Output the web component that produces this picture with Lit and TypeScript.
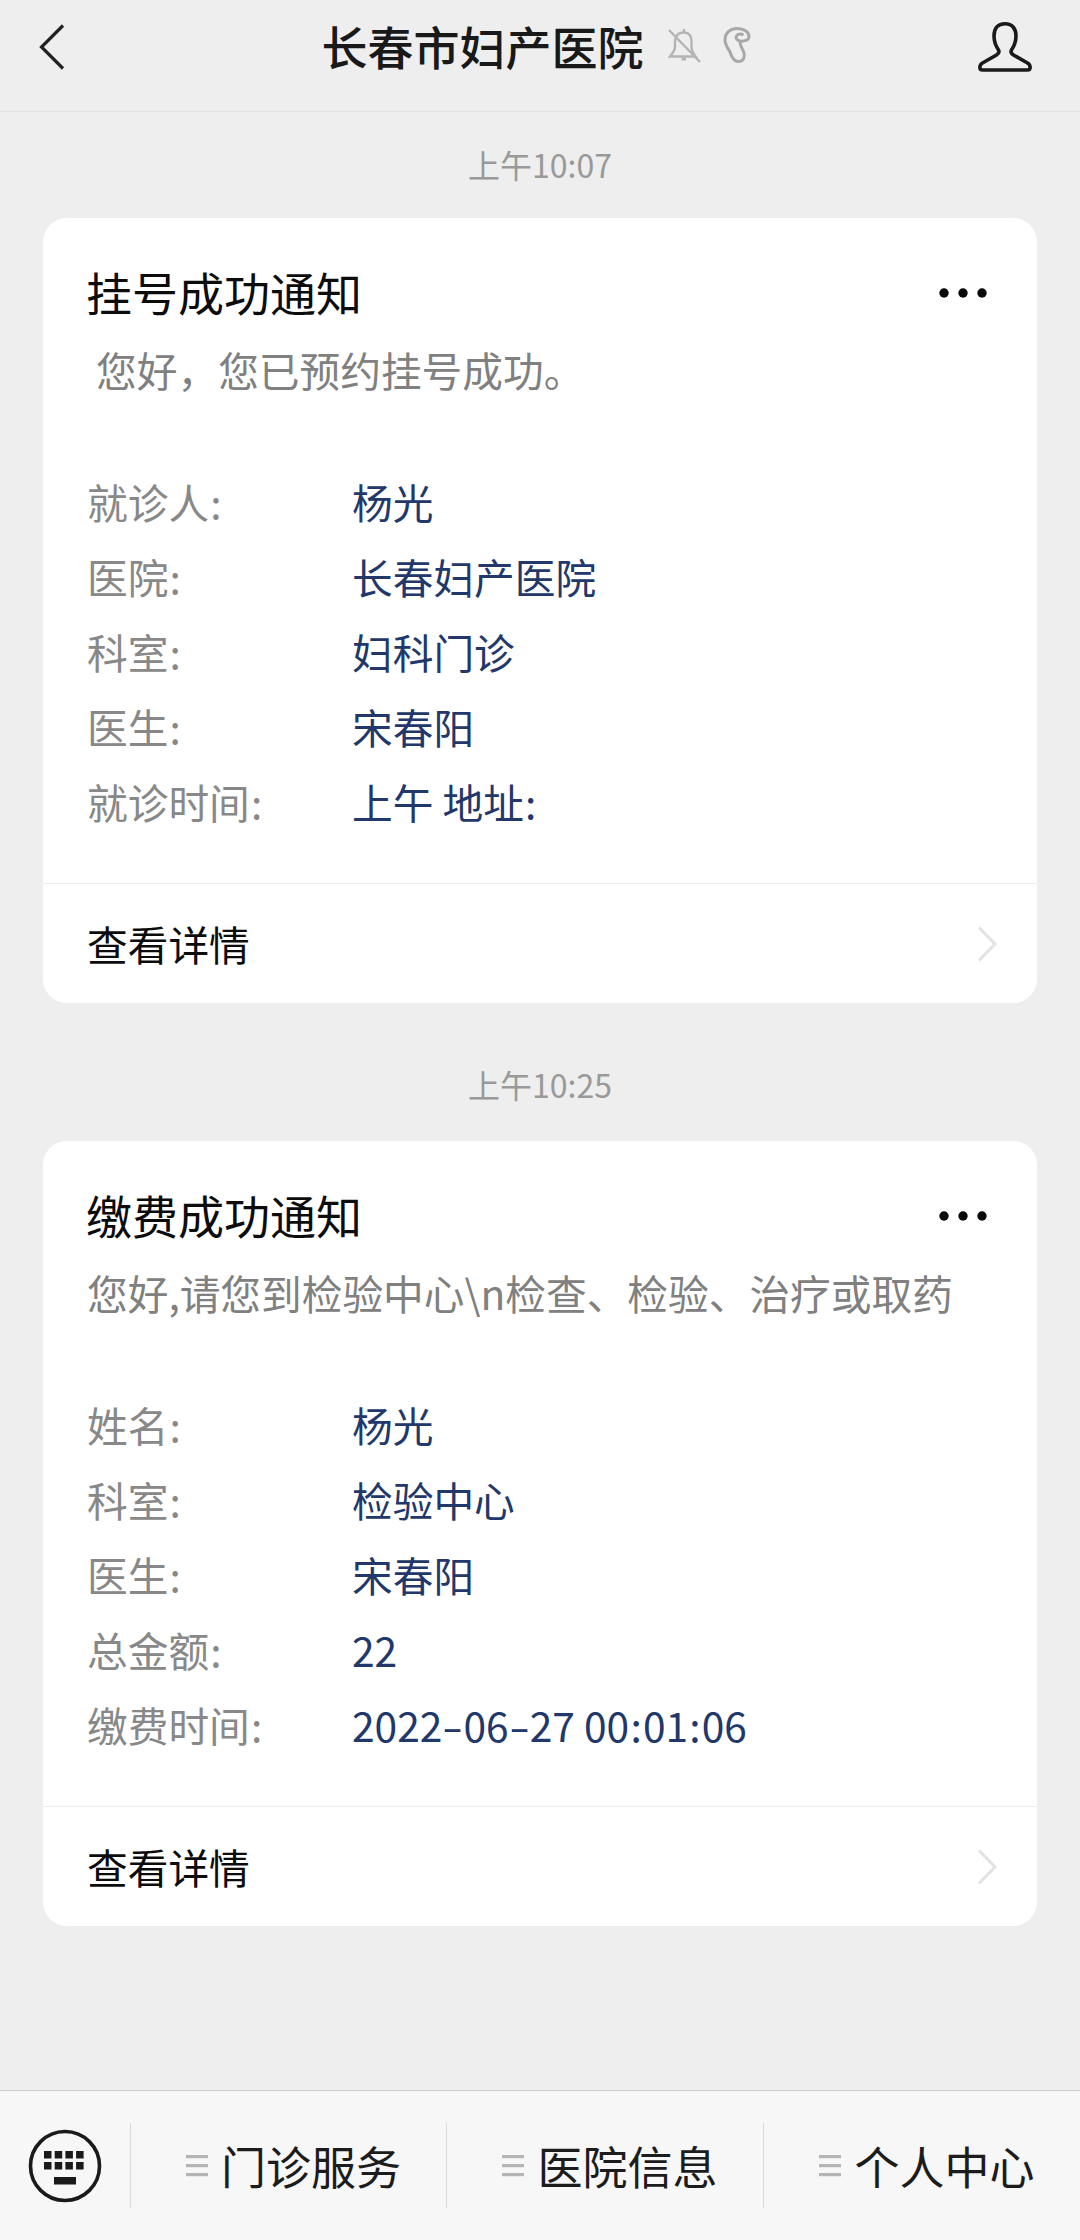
import { LitElement, html, css, svg } from "lit";
import { customElement } from "lit/decorators.js";

interface Notice {
  time: string;
  title: string;
  intro: string;
  rows: [string, string][];
}

const notices: Notice[] = [
  {
    time: "上午10:07",
    title: "挂号成功通知",
    intro: " 您好\uFF0C您已预约挂号成功。",
    rows: [
      ["就诊人:", "杨光"],
      ["医院:", "长春妇产医院"],
      ["科室:", "妇科门诊"],
      ["医生:", "宋春阳"],
      ["就诊时间:", "上午 地址:"],
    ],
  },
  {
    time: "上午10:25",
    title: "缴费成功通知",
    intro: "您好,请您到检验中心\\n检查、检验、治疗或取药",
    rows: [
      ["姓名:", "杨光"],
      ["科室:", "检验中心"],
      ["医生:", "宋春阳"],
      ["总金额:", "22"],
      ["缴费时间:", "2022-06-27 00:01:06"],
    ],
  },
];

const menus = ["门诊服务", "医院信息", "个人中心"];

const keys = [0, 1, 2, 3].flatMap((col) =>
  [0, 1].map(
    (row) => svg`<rect x=${16 + col * 10.7} y=${22 + row * 11} width="7.5" height="7.5"></rect>`
  )
);

// hyphens and colons get a wider advance than the font gives them
const spaced = (text: string) =>
  text
    .split(/([-:])/)
    .map((part) =>
      part === "-"
        ? html`<span class="dash">-</span>`
        : part === ":"
        ? html`<span class="colon">:</span>`
        : part
    );

@customElement("app-root")
export class AppRoot extends LitElement {
  static styles = css`
    :host {
      display: block;
      width: 1080px;
      height: 2240px;
      font-family: "Noto Sans CJK SC", "Liberation Sans", sans-serif;
      background: #eee;
    }

    .page {
      height: 100%;
      display: flex;
      flex-direction: column;
    }

    .topbar {
      flex: none;
      height: 111px;
      border-bottom: 1px solid #e3e3e3;
      display: grid;
      grid-template-columns: 130px 1fr 130px;
      align-items: center;
    }

    .back {
      display: block;
      margin-left: 38px;
      margin-top: -17px;
    }

    .name {
      display: flex;
      align-items: center;
      justify-content: center;
      margin-top: -22px;
      margin-left: -8px;
      gap: 23px;
      font-size: 46px;
      font-weight: 500;
      line-height: 60px;
      color: #191919;
    }

    .mute {
      display: flex;
      gap: 22px;
    }

    .person {
      display: block;
      margin-left: 28px;
      margin-top: -17px;
    }

    .feed {
      flex: 1;
      padding: 0 43px;
    }

    .time {
      padding: 59px 0 35px;
      text-align: center;
      font-size: 32px;
      line-height: 44px;
      color: #999;
    }

    .time.first {
      padding: 30px 0 32px;
    }

    .card {
      background: #fff;
      border-radius: 24px;
      overflow: hidden;
    }

    .body {
      padding: 43px 44px 44px;
    }

    .title {
      display: flex;
      align-items: center;
      justify-content: space-between;
      font-size: 46px;
      line-height: 60px;
      color: #0c0c0c;
    }

    .title span {
      margin-left: -1px;
    }

    .intro {
      margin-top: 21px;
      font-size: 40.7px;
      line-height: 56px;
      color: #808080;
      white-space: pre;
    }

    .rows {
      margin-top: 66px;
    }

    .row {
      display: grid;
      grid-template-columns: 265px 1fr;
      font-size: 40.7px;
      line-height: 75px;
    }

    .label {
      color: #888;
    }

    .value {
      color: #22386a;
    }

    .dash {
      display: inline-block;
      padding: 0 3.5px;
      transform: scaleX(1.5);
    }

    .colon {
      padding: 0 1.2px;
    }

    .more {
      display: block;
      margin-right: 5px;
      margin-top: 4px;
    }

    .detail {
      height: 119px;
      border-top: 1px solid #ebebeb;
      padding: 0 40px 0 44px;
      display: flex;
      align-items: center;
      justify-content: space-between;
      font-size: 40.7px;
      color: #0c0c0c;
    }

    .menubar {
      flex: none;
      height: 117px;
      padding-top: 32px;
      border-top: 1px solid #cfcfcf;
      background: #f7f7f7;
      display: grid;
      grid-template-columns: 130px 316px 317px 317px;
    }

    .keyboard {
      display: flex;
      justify-content: center;
      align-items: center;
      height: 85px;
    }

    .menu {
      height: 85px;
      border-left: 1px solid #dadada;
      display: flex;
      align-items: center;
      justify-content: center;
      gap: 13px;
      padding-left: 10px;
      font-size: 45px;
      color: #1c1c1c;
    }

    .bars {
      display: block;
      flex: none;
    }
  `;

  private card(n: Notice, index: number) {
    return html`
      <div class="time ${index === 0 ? "first" : ""}">${n.time}</div>
      <section class="card">
        <div class="body">
          <div class="title">
            <span>${n.title}</span>
            <svg class="more" width="50" height="12" viewBox="0 0 50 12" fill="#0a0a0a">
              <circle cx="6" cy="6" r="4.7"></circle>
              <circle cx="25" cy="6" r="4.7"></circle>
              <circle cx="44" cy="6" r="4.7"></circle>
            </svg>
          </div>
          <div class="intro">${n.intro}</div>
          <div class="rows">
            ${n.rows.map(
              ([label, value]) => html`<div class="row">
                <span class="label">${spaced(label)}</span><span class="value">${spaced(value)}</span>
              </div>`
            )}
          </div>
        </div>
        <div class="detail">
          <span>查看详情</span>
          <svg width="20" height="36" viewBox="0 0 20 36" fill="none" stroke="#e2e2e2" stroke-width="3">
            <path d="M2 1.5 L18 18 L2 34.5"></path>
          </svg>
        </div>
      </section>
    `;
  }

  render() {
    return html`<div class="page">
      <header class="topbar">
        <svg class="back" width="28" height="46" viewBox="0 0 28 46" fill="none" stroke="#222" stroke-width="3.2">
          <path d="M25 1.5 L3.5 23 L25 44.5"></path>
        </svg>
        <div class="name">
          <span>长春市妇产医院</span>
          <span class="mute">
            <svg width="34" height="36" viewBox="0 0 34 36" fill="none" stroke="#b4b4b4" stroke-width="2.4">
              <path d="M17 2 V5.5 M17 5.5 C10 5.5 8 10 8 15 V20 C8 24 5.5 26 3 29.5 H28.5 C26 26 24.5 24 24.5 20 V15 C24.5 10 23 5.5 17 5.5 Z"></path>
              <path d="M14.5 32 H19" stroke-width="3"></path>
              <path d="M2 3 L33 35"></path>
            </svg>
            <svg width="28" height="36" viewBox="0 0 28 36" fill="none" stroke="#a8a8a8" stroke-width="3">
              <path d="M2 13 C2 6 7 1.5 14 1.5 C21 1.5 26 5 26 9.5 C26 13.5 21 14.5 17 14 C13.5 13.5 12.5 11 13.5 9 C14.5 7 17.5 6.5 20.5 8 M2 13 C2 18 5 21 7 25 C8.5 28 9 34.5 15.5 34.5 C20.5 34.5 22 30 21 26 C20 22 16.5 18.5 17 14"></path>
            </svg>
          </span>
        </div>
        <svg class="person" width="54" height="50" viewBox="0 0 54 50" fill="none" stroke="#1a1a1a" stroke-width="3.6" stroke-linejoin="round">
          <path d="M27 1.8 C19.5 1.8 16 7 16 14 C16 21 18.5 25 20.5 28 C21.5 30 21 31.5 18.5 33 L4.5 41 C1 43 1 48 4.5 48 H49.5 C53 48 53 43 49.5 41 L35.5 33 C33 31.5 32.5 30 33.5 28 C35.5 25 38 21 38 14 C38 7 34.5 1.8 27 1.8 Z"></path>
        </svg>
      </header>

      <main class="feed">${notices.map((n, i) => this.card(n, i))}</main>

      <nav class="menubar">
        <div class="keyboard">
          <svg width="74" height="74" viewBox="0 0 74 74" fill="#1a1a1a">
            <circle cx="37" cy="37" r="34.5" fill="none" stroke="#1a1a1a" stroke-width="3.6"></circle>
            ${keys}
            <rect x="26" y="48" width="22" height="7.5"></rect>
          </svg>
        </div>
        ${menus.map(
          (m) => html`<div class="menu">
            <svg class="bars" width="22" height="22" viewBox="0 0 22 22" fill="#b5b5b5">
              <rect x="0" y="0" width="22" height="3.2"></rect>
              <rect x="0" y="9" width="22" height="3.2"></rect>
              <rect x="0" y="18" width="22" height="3.2"></rect>
            </svg>
            <span>${m}</span>
          </div>`
        )}
      </nav>
    </div>`;
  }
}
